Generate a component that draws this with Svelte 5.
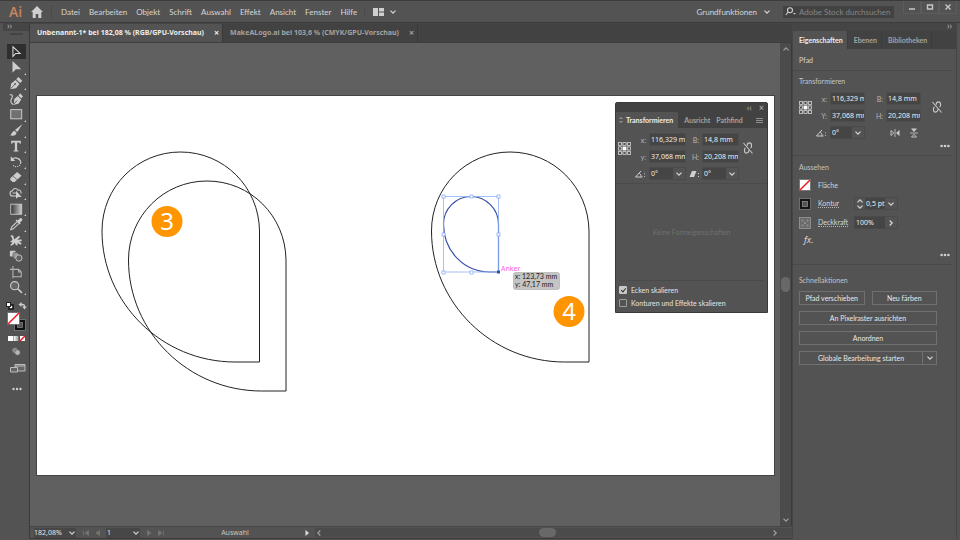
<script>
  const menus = ["Datei", "Bearbeiten", "Objekt", "Schrift", "Auswahl", "Effekt", "Ansicht", "Fenster", "Hilfe"];

  const tools = [
    { name: "Auswahl", icon: "select" },
    { name: "Direktauswahl", icon: "direct", more: true },
    { name: "Zeichenstift", icon: "pen", more: true },
    { name: "Kurvenzeichner", icon: "curve" },
    { name: "Rechteck", icon: "rect", more: true },
    { name: "Pinsel", icon: "brush", more: true },
    { name: "Text", icon: "type", more: true },
    { name: "Drehen", icon: "rotate", more: true },
    { name: "Radiergummi", icon: "eraser", more: true },
    { name: "Formerstellung", icon: "builder", more: true },
    { name: "Verlauf", icon: "gradient", more: true },
    { name: "Pipette", icon: "dropper", more: true },
    { name: "Marionette", icon: "puppet", more: true },
    { name: "Angleichen", icon: "blend" },
    { name: "Zeichenfläche", icon: "artboard" },
    { name: "Zoom", icon: "zoom", more: true },
  ];

  const handles = [
    [443, 195], [471, 195], [498, 195],
    [443, 233], [498, 233],
    [443, 271], [471, 271],
  ];

  const drop =
    "M180.5 151C224 151 259 186 259.500 230V361H235C162 361 102 302 102 230C102 186 137 151 180.500 151Z";

  let activeTool = $state("select");
  let scaleCorners = $state(true);
  let scaleStrokes = $state(false);
</script>

{#snippet chevron(dir = "down")}
  <svg class="chevron {dir}" viewBox="0 0 8 8" width="8" height="8" aria-hidden="true">
    <path d="M1.500 2.700 4 5.200 6.500 2.700" />
  </svg>
{/snippet}

{#snippet refPoint()}
  <svg class="ref-point" viewBox="0 0 13 13" width="13" height="13" aria-hidden="true">
    <path d="M2 2h9v9H2z" fill="none" stroke="#b8b8b8" />
    {#each [2, 6.5, 11] as cy}
      {#each [2, 6.5, 11] as cx}
        <rect x={cx - 1.5} y={cy - 1.5} width="3" height="3" fill={cx === 6.5 && cy === 6.5 ? "#fff" : "#535353"} stroke={cx === 6.5 && cy === 6.5 ? "#fff" : "#c4c4c4"} stroke-width="0.9" />
      {/each}
    {/each}
  </svg>
{/snippet}

{#snippet linkIcon()}
  <button class="icon-btn link" aria-label="Proportionen erhalten">
    <svg viewBox="0 0 12 12" width="12" height="12" fill="none" stroke="#c8c8c8" stroke-width="1.100">
      <path d="M5.300 3.800V3a2.100 2.100 0 0 1 4.200 0v1.500a2 2 0 0 1-1 1.600M6.700 8.200V9a2.100 2.100 0 0 1-4.200 0V7.500a2 2 0 0 1 1-1.600M1.500 1l9 10.500" />
    </svg>
  </button>
{/snippet}

{#snippet angleIcon()}
  <svg class="angle" viewBox="0 0 12 8" width="12" height="8" fill="none" stroke="#cfcfcf" stroke-width="1">
    <path d="M8.500 7H1.500L7 1M5.200 3.200c1.400.8 1.900 2.200 1.900 3.600" />
    <path d="M10.500 3.500v.8M10.500 6.200v.8" />
  </svg>
{/snippet}

{#snippet dots()}
  <button class="icon-btn dots" aria-label="Mehr Optionen">
    <svg viewBox="0 0 10 4" width="10" height="4" fill="#d0d0d0">
      <circle cx="1.600" cy="2" r="1.300" /><circle cx="5" cy="2" r="1.300" /><circle cx="8.400" cy="2" r="1.300" />
    </svg>
  </button>
{/snippet}

{#snippet toolIcon(icon)}
  <svg viewBox="0 0 16 16" width="14" height="14" fill="#cdcdcd" stroke="none">
    {#if icon === "select"}
      <path d="M4.500 2v11l3.200-3.300h5z" fill="none" stroke="#d8d8d8" stroke-width="1.200" />
    {:else if icon === "direct"}
      <path d="M4 1v13.500l3.800-3.800H14z" />
    {:else if icon === "pen"}
      <path d="M1.500 15 2.500 8.500l5-4 4.500 4.500-4 5zM8.300 3.700l2.400-2.700 4.500 4.500-2.500 2.500z" />
      <path d="m2 14.500 4.500-5" stroke="#535353" stroke-width="0.900" /><circle cx="7" cy="9" r="1" fill="#535353" />
    {:else if icon === "curve"}
      <path d="M5.500 14.500 6 8l4-3.500 4 4-3.200 4.800zM10.800 4l2-2.500 3.200 3.500-2 2z" />
      <path d="M.8 3.500c3-1.500 4 1.500 2.200 4s-1 5.500 2 7" fill="none" stroke="#cdcdcd" stroke-width="1.300" />
      <path d="m6 13.500 3.200-3.800" stroke="#535353" />
    {:else if icon === "rect"}
      <rect x="2" y="3" width="12.500" height="10.500" fill="#707070" stroke="#cdcdcd" stroke-width="1.100" />
    {:else if icon === "brush"}
      <path d="M15.500 1 9.500 10.200 6.800 8zM6 8.800l2.600 2.200c-.3 3-3.400 4.300-7.600 3C3.500 13 3 10 6 8.800z" />
    {:else if icon === "type"}
      <path d="M2.500 2h11v3.500h-1.200L11.800 4H9.300v8.800l1.600.5v1H5.100v-1l1.600-.5V4H4.200l-.5 1.500H2.500z" />
    {:else if icon === "rotate"}
      <path d="M3 5.200C7 1.500 13.500 4 13.500 9" fill="none" stroke="#cdcdcd" stroke-width="1.400" />
      <path d="M13.300 9C13 13.500 7 15 4 11" fill="none" stroke="#cdcdcd" stroke-width="1.200" stroke-dasharray="1.200 1.300" />
      <path d="M2 1.500v5.300h5.200z" />
    {:else if icon === "eraser"}
      <path d="m1.500 9.500 7.800-7.300 5 4.300-7.800 7.300H4.200L1.500 11.500z" />
      <path d="m4.500 7 5 4.300" stroke="#535353" stroke-width="0.900" />
    {:else if icon === "builder"}
      <path d="M8 11.500H4.500a3 3 0 0 1-.5-6c.5-3 5-3.500 6-.8 3-.5 4.500 2 3.600 4M4 8h4" fill="none" stroke="#cdcdcd" stroke-width="1.200" />
      <path d="M8 5.500v9.200l2.500-2.200h4z" />
    {:else if icon === "gradient"}
      <rect x="2" y="2.500" width="12.500" height="11.500" fill="url(#grad)" stroke="#cdcdcd" />
    {:else if icon === "dropper"}
      <path d="m10 4 2.500-2.500c1.500-1 3.500 1 2.500 2.500L12.500 6.500l.8.800-1.300 1.200-4.500-4.500 1.200-1.200z" />
      <path d="M9 5.500 3 11.500 2 14.500l3-1 6-6" fill="none" stroke="#cdcdcd" stroke-width="1.200" />
    {:else if icon === "puppet"}
      <path d="M1.500 3.500c1-1.500 3.500-1 3.800.8.200 1.200 0 2 .7 2.700l5.500-4 1.200 1.500L9.500 8l4.500-.8.800 1.800-3.500 1 3.200 1.500-1 1.800-4-1.800.5 2.500H8l-1.500-3c-1 2-2.800 3.500-5 3.300 0-1.800 2-1.500 2.300-3.800-1 .3-2.300-.2-2.300-1.500 1.500.3 2.300-.3 2.300-1.500S2.800 4 1.500 3.500z" />
    {:else if icon === "blend"}
      <rect x="1" y="2" width="6.500" height="6.500" rx="1" />
      <rect x="4.500" y="4" width="6.500" height="7" rx="2" fill="#999" stroke="#535353" stroke-width="0.800" />
      <circle cx="11.300" cy="10.300" r="3.600" fill="#606060" stroke="#cdcdcd" />
    {:else if icon === "artboard"}
      <path d="M4.500 1v14M1 5h10l3 3v5.500H4.500M11 5v3h3" fill="none" stroke="#b5b5b5" stroke-width="1.200" />
    {:else}
      <circle cx="6.500" cy="6.500" r="4.700" fill="#666" stroke="#cdcdcd" stroke-width="1.300" />
      <path d="m10 10 4.800 4.800" stroke="#cdcdcd" stroke-width="1.900" />
    {/if}
  </svg>
{/snippet}

<div class="app">
  <header class="menubar">
    <span class="logo">Ai</span>
    <button class="icon-btn home" aria-label="Startseite">
      <svg viewBox="0 0 12 12" width="12" height="12" fill="#cfcfcf"><path d="M6 0 0 6h1.700v6h3V8h2.600v4h3V6H12z" /></svg>
    </button>
    <nav>
      {#each menus as menu}
        <button class="menu">{menu}</button>
      {/each}
    </nav>
    <button class="icon-btn arrange" aria-label="Dokumente anordnen">
      <svg viewBox="0 0 11 8" width="11" height="8" fill="#cfcfcf"><path d="M0 0h5v8H0zM6 0h5v3.500H6zM6 4.500h5V8H6z" /></svg>
      {@render chevron()}
    </button>
    <button class="workspace">Grundfunktionen {@render chevron()}</button>
    <label class="search">
      <svg viewBox="0 0 12 9" width="12" height="9" fill="none" stroke="#d0d0d0" stroke-width="1.100">
        <circle cx="5" cy="3.200" r="2.500" /><path d="M3.200 5 .8 8" /><path d="M8 6h3L9.500 7.500z" fill="#d0d0d0" stroke="none" />
      </svg>
      <input type="text" placeholder="Adobe Stock durchsuchen" aria-label="Adobe Stock durchsuchen" />
    </label>
    <div class="window-buttons">
      <button aria-label="Minimieren"><svg viewBox="0 0 8 8" width="8" height="8"><path d="M1 6h6" stroke-width="1.500" /></svg></button>
      <button aria-label="Maximieren"><svg viewBox="0 0 8 8" width="8" height="8"><path d="M1.500 2h5v4h-5z" stroke-width="1.400" /></svg></button>
      <button aria-label="Schließen"><svg viewBox="0 0 8 8" width="8" height="8"><path d="m1.500 1.500 5 5M6.500 1.500l-5 5" stroke-width="1.400" /></svg></button>
    </div>
  </header>

  <div class="workarea">
    <aside class="toolbar">
      <div class="collapse">››</div>
      <div class="grip"></div>
      <div class="tools">
        {#each tools as tool}
          <button
            class="tool"
            class:active={activeTool === tool.icon}
            class:more={tool.more}
            aria-label={tool.name}
            onclick={() => (activeTool = tool.icon)}
          >
            {@render toolIcon(tool.icon)}
          </button>
        {/each}
      </div>
      <svg class="swatches" viewBox="0 0 22 96" width="22" height="96" aria-hidden="true">
        <defs>
          <linearGradient id="grad"><stop offset="0" stop-color="#333" /><stop offset="1" stop-color="#ccc" /></linearGradient>
          <linearGradient id="grad-light"><stop offset="0" stop-color="#fff" /><stop offset="1" stop-color="#999" /></linearGradient>
        </defs>
        <!-- default colours and swap -->
        <rect x="4" y="5" width="4" height="4" fill="#fff" stroke="#111" stroke-width="1.500" />
        <rect x="1.500" y="2.500" width="4" height="4" fill="#fff" stroke="#222" />
        <path d="M16 4.500h1.500a2 2 0 0 1 2 2V7" fill="none" stroke="#ccc" stroke-width="1.300" />
        <path d="M13.500 4.500 16.500 2v5zM17.200 6.500h4.600L19.500 9.500z" fill="#ccc" />
        <!-- stroke behind fill -->
        <rect x="9.500" y="19.500" width="11" height="11" fill="#111" stroke="#8a8a8a" stroke-width="0.700" />
        <rect x="12.500" y="22.500" width="5" height="5" fill="#535353" stroke="#8a8a8a" stroke-width="0.700" />
        <rect x="2.500" y="12.500" width="12" height="12" fill="#fff" stroke="#666" stroke-width="0.800" />
        <path d="M3 24 14 13" stroke="#f0141e" stroke-width="1.500" />
        <!-- colour, gradient, none -->
        <rect x="3" y="36" width="5" height="5" fill="#fff" />
        <rect x="8.500" y="36" width="5" height="5" fill="url(#grad-light)" />
        <rect x="15" y="36" width="5" height="5" fill="#fff" />
        <path d="m15 41 5-5" stroke="#f0141e" stroke-width="1.500" />
        <circle cx="10" cy="50.500" r="2.700" fill="#8c8c8c" />
        <circle cx="12.500" cy="52.500" r="2.700" fill="#b5b5b5" stroke="#535353" stroke-width="0.500" />
        <path d="M10 64.500h10v6.500H10zM10 66h10" fill="#666" stroke="#bdbdbd" />
        <path d="M5.500 67.500h7v4.500h-7z" fill="#666" stroke="#bdbdbd" />
        <g fill="#d0d0d0"><circle cx="8.500" cy="89" r="1.200" /><circle cx="12" cy="89" r="1.200" /><circle cx="15.500" cy="89" r="1.200" /></g>
      </svg>
    </aside>

    <main class="document">
      <div class="tabs">
        <div class="tab active">
          <span>Unbenannt-1* bei 182,08 % (RGB/GPU-Vorschau)</span>
          <button aria-label="Unbenannt-1 schließen">×</button>
        </div>
        <div class="tab">
          <span>MakeALogo.ai bei 103,6 % (CMYK/GPU-Vorschau)</span>
          <button aria-label="MakeALogo.ai schließen">×</button>
        </div>
      </div>

      <div class="canvas-row">
        <div class="canvas">
          <svg class="artboard" viewBox="37 95 737 379">
            <rect x="37" y="95" width="737" height="379" fill="#fff" />
            <g fill="none" stroke="#222" stroke-width="1">
              <path d={drop} />
              <path d={drop} transform="translate(26.500 29)" />
              <path d={drop} transform="translate(329.500 0)" />
            </g>
            <path d="M471 195.500C486 195.500 498.500 208 498.500 223V271H490C464 271 443.500 250 443.500 223C443.500 208 456 195.500 471 195.500Z" fill="none" stroke="#3a50a8" stroke-width="1.200" />
            <rect x="443.500" y="195.500" width="55" height="75.500" fill="none" stroke="#8fb0f5" stroke-width="0.800" />
            {#each handles as [x, y]}
              <rect x={x - 1} y={y - 1} width="3" height="3" fill="#fff" stroke="#7fa4f5" stroke-width="0.700" />
            {/each}
            <rect x="497" y="269.500" width="3" height="3" fill="#3a50a8" />
            <text class="hint" x="501" y="270">Anker</text>
            <rect x="513.500" y="271.500" width="46" height="17" rx="2" fill="#c4c4c4" stroke="#a8a8a8" stroke-width="0.600" />
            <text class="measure" x="515" y="278">x: 123,73 mm</text>
            <text class="measure" x="515" y="286">y: 47,17 mm</text>
            <circle cx="167" cy="220.500" r="15.500" fill="#ff9500" />
            <text class="badge" x="167" y="229">3</text>
            <circle cx="569" cy="310.500" r="15.500" fill="#ff9500" />
            <text class="badge" x="569" y="319">4</text>
          </svg>

          <section class="float">
            <div class="float-bar">
              <button aria-label="Minimieren">‹‹</button>
              <button aria-label="Schließen">×</button>
            </div>
            <div class="float-tabs">
              <button class="active">
                <svg viewBox="0 0 4 8" width="4" height="8" fill="none" stroke="#b0b0b0"><path d="m.5 3 1.500-1.500L3.500 3M.5 5 2 6.500 3.500 5" /></svg>
                Transformieren
              </button>
              <button>Ausricht</button>
              <button>Pathfind</button>
              <button class="burger" aria-label="Bedienfeldmenü">
                <svg viewBox="0 0 8 7" width="8" height="7" stroke="#999"><path d="M0 1.500h7M0 3.500h7M0 5.500h7" stroke-width="0.900" /></svg>
              </button>
            </div>
            <div class="transform narrow">
              <span class="ref">{@render refPoint()}</span>
              <label for="fx">x:</label><input id="fx" type="text" value="116,329 mm" />
              <label for="fb">B:</label><input id="fb" type="text" value="14,8 mm" />
              <span class="lock">{@render linkIcon()}</span>
              <label for="fy">y:</label><input id="fy" type="text" value="37,068 mm" />
              <label for="fh">H:</label><input id="fh" type="text" value="20,208 mm" />
              <label class="icon-label" for="fa" aria-label="Drehen">{@render angleIcon()}</label>
              <span class="combo"><input id="fa" type="text" value="0°" /><button aria-label="Winkel wählen">{@render chevron()}</button></span>
              <label class="icon-label" for="fs" aria-label="Verbiegen">
                <svg viewBox="0 0 10 8" width="10" height="8" fill="#cfcfcf"><path d="M3 1h4.500L5 7H.5zM9 3h1v1H9zM9 6h1v1H9z" /></svg>
              </label>
              <span class="combo"><input id="fs" type="text" value="0°" /><button aria-label="Neigung wählen">{@render chevron()}</button></span>
            </div>
            <p class="empty">Keine Formeigenschaften</p>
            <div class="checks">
              <label><input type="checkbox" bind:checked={scaleCorners} />Ecken skalieren</label>
              <label><input type="checkbox" bind:checked={scaleStrokes} />Konturen und Effekte skalieren</label>
            </div>
          </section>
        </div>
        <div class="vscroll">
          {@render chevron("up")}
          <span class="thumb"></span>
          {@render chevron()}
        </div>
      </div>

      <footer class="status">
        <div class="picker zoom">
          <select aria-label="Zoomstufe"><option>182,08%</option></select>
          {@render chevron()}
        </div>
        <button class="icon-btn nav" aria-label="Erste"><svg viewBox="0 0 8 8" width="8" height="8"><path d="M1.500 1.500v5M6.500 1.500v5L3 4z" /></svg></button>
        <button class="icon-btn nav" aria-label="Zurück"><svg viewBox="0 0 8 8" width="8" height="8"><path d="M5.500 1.500v5L2 4z" /></svg></button>
        <div class="picker page">
          <select aria-label="Zeichenfläche"><option>1</option></select>
          {@render chevron()}
        </div>
        <button class="icon-btn nav" aria-label="Weiter"><svg viewBox="0 0 8 8" width="8" height="8"><path d="M2.500 1.500v5L6 4z" /></svg></button>
        <button class="icon-btn nav" aria-label="Letzte"><svg viewBox="0 0 8 8" width="8" height="8"><path d="M6.500 1.500v5M1.500 1.500v5L5 4z" /></svg></button>
        <span class="current">Auswahl</span>
        <button class="icon-btn play" aria-label="Statusanzeige"><svg viewBox="0 0 8 8" width="8" height="8" fill="#ddd"><path d="M2.500 1v6L6 4z" /></svg></button>
        <div class="hscroll">
          {@render chevron("left")}
          <span class="thumb"></span>
          {@render chevron("right")}
        </div>
      </footer>
    </main>

    <aside class="properties">
      <div class="collapse">››</div>
      <div class="panel-tabs">
        <button class="active">Eigenschaften</button>
        <button>Ebenen</button>
        <button>Bibliotheken</button>
      </div>
      <div class="kind">Pfad</div>

      <section class="group">
        <h2>Transformieren</h2>
        <div class="transform">
          <span class="ref">{@render refPoint()}</span>
          <label for="px">x:</label><input id="px" type="text" value="116,329 mm" />
          <label for="pb">B:</label><input id="pb" type="text" value="14,8 mm" />
          <span class="lock">{@render linkIcon()}</span>
          <label for="py">Y:</label><input id="py" type="text" value="37,068 mm" />
          <label for="ph">H:</label><input id="ph" type="text" value="20,208 mm" />
          <label class="icon-label" for="pa" aria-label="Drehen">{@render angleIcon()}</label>
          <span class="combo"><input id="pa" type="text" value="0°" /><button aria-label="Winkel wählen">{@render chevron()}</button></span>
          <span class="flips">
            <button class="icon-btn" aria-label="Horizontal spiegeln">
              <svg viewBox="0 0 10 8" width="10" height="8"><path d="M1 1.500v5L3.800 4z" fill="none" stroke="#ccc" stroke-width="0.900" /><path d="M5 0v8" stroke="#ccc" stroke-width="0.800" /><path d="M9.500 1v6L6 4z" fill="#ccc" /></svg>
            </button>
            <button class="icon-btn" aria-label="Vertikal spiegeln">
              <svg viewBox="0 0 8 10" width="8" height="10"><path d="M1 .5h6L4 4z" fill="#ccc" /><path d="M0 5h8" stroke="#ccc" stroke-width="0.800" /><path d="M1.500 9h5L4 6.200z" fill="none" stroke="#ccc" stroke-width="0.900" /></svg>
            </button>
          </span>
        </div>
        {@render dots()}
      </section>

      <section class="group look">
        <h2>Aussehen</h2>
        <div class="row">
          <svg viewBox="0 0 12 12" width="12" height="12"><rect x=".5" y=".5" width="11" height="11" fill="#fff" stroke="#777" /><path d="M1 11 11 1" stroke="#f0141e" stroke-width="1.500" /></svg>
          <span class="name">Fläche</span>
        </div>
        <div class="row">
          <svg viewBox="0 0 12 12" width="12" height="12"><rect x=".5" y=".5" width="11" height="11" fill="#151515" stroke="#888" stroke-width="0.700" /><rect x="3.500" y="3.500" width="5" height="5" fill="#535353" stroke="#999" stroke-width="0.700" /></svg>
          <button class="name underlined">Kontur</button>
          <span class="combo">
            <button class="stepper" aria-label="Konturstärke ändern">{@render chevron("up")}{@render chevron()}</button>
            <input type="text" value="0,5 pt" aria-label="Konturstärke" />
            <button aria-label="Konturstärke wählen">{@render chevron()}</button>
          </span>
        </div>
        <div class="row">
          <svg viewBox="0 0 12 12" width="12" height="12"><rect x=".5" y=".5" width="11" height="11" fill="#6a6a6a" stroke="#999" stroke-width="0.800" /><path d="M2.500 2.500h2v2h-2zM7.500 2.500h2v2h-2zM5 5h2v2H5zM2.500 7.500h2v2h-2zM7.500 7.500h2v2h-2z" fill="#8d8d8d" /></svg>
          <button class="name underlined">Deckkraft</button>
          <span class="combo">
            <input type="text" value="100%" aria-label="Deckkraft" />
            <button aria-label="Deckkraft wählen">{@render chevron("right")}</button>
          </span>
        </div>
        <button class="effect">fx.</button>
        {@render dots()}
      </section>

      <section class="group actions">
        <h2>Schnellaktionen</h2>
        <div class="buttons">
          <button>Pfad verschieben</button>
          <button>Neu färben</button>
          <button class="wide">An Pixelraster ausrichten</button>
          <button class="wide">Anordnen</button>
          <span class="wide split">
            <button>Globale Bearbeitung starten</button>
            <button aria-label="Optionen">{@render chevron()}</button>
          </span>
        </div>
      </section>
    </aside>
  </div>
</div>

<style>
  :global(body) {
    background: #535353;
  }

  .app {
    box-sizing: border-box;
    display: flex;
    flex-direction: column;
    min-height: 100vh;
    border-top: 1px solid #3c3c3c;
    background: #535353;
    color: #d6d6d6;
    font-family: Lato, "Open Sans", sans-serif;
    font-size: 7px;
    line-height: 10px;
  }

  button,
  input,
  select {
    box-sizing: border-box;
    margin: 0;
    padding: 0;
    border: 0;
    border-radius: 0;
    background: none;
    color: inherit;
    font: inherit;
    min-width: 0;
  }

  svg {
    display: block;
    flex: none;
  }

  .icon-btn {
    display: flex;
    align-items: center;
    justify-content: center;
  }

  .chevron {
    fill: none;
    stroke: #d6d6d6;
    stroke-width: 1.2;
  }

  .chevron.up {
    transform: rotate(180deg);
  }

  .chevron.left {
    transform: rotate(90deg);
  }

  .chevron.right {
    transform: rotate(-90deg);
  }

  /* Menu bar */
  .menubar {
    display: flex;
    align-items: center;
    height: 22px;
    box-sizing: border-box;
    padding: 0 3px 0 9px;
    border-bottom: 1px solid #3c3c3c;
  }

  .logo {
    width: 22px;
    color: #c98560;
    font-family: "Open Sans", sans-serif;
    font-size: 14px;
    font-weight: 600;
    line-height: 18px;
  }

  nav {
    display: flex;
    gap: 9px;
    margin-left: 8px;
    padding-left: 9px;
    border-left: 1px solid #4a4a4a;
  }

  .menu,
  .workspace {
    font-size: 8px;
    line-height: 14px;
  }

  .arrange {
    gap: 5px;
    margin-left: 7px;
    padding-left: 8px;
    border-left: 1px solid #4a4a4a;
  }

  .workspace {
    display: flex;
    align-items: center;
    gap: 6px;
    margin-left: auto;
    padding-right: 12px;
  }

  .search {
    display: flex;
    align-items: center;
    gap: 2px;
    width: 111px;
    height: 12px;
    padding-left: 2px;
    box-sizing: border-box;
    background: #424242;
  }

  .search input {
    flex: 1;
    font-size: 8px;
  }

  .search input::placeholder {
    color: #858585;
    opacity: 1;
  }

  .window-buttons {
    display: flex;
    align-self: flex-start;
    margin-left: 9px;
  }

  .window-buttons button {
    display: flex;
    align-items: center;
    justify-content: center;
    width: 18px;
    height: 13px;
    border: 1px solid #5c5c5c;
    border-top: 0;
  }

  .window-buttons svg {
    fill: none;
    stroke: #c8c8c8;
  }

  /* Main row */
  .workarea {
    display: flex;
    flex: 1;
    padding: 0 3px 1px 3px;
  }

  .collapse {
    height: 8px;
    padding: 0 4px;
    background: #454545;
    color: #c0c0c0;
    font-size: 9px;
    line-height: 6px;
  }

  /* Tools */
  .toolbar {
    display: flex;
    flex-direction: column;
    align-items: center;
    width: 27px;
    border-right: 1px solid #3a3a3a;
    box-sizing: border-box;
  }

  .toolbar .collapse {
    align-self: stretch;
  }

  .grip {
    width: 13px;
    height: 2px;
    margin: 2px 0 9px;
    background: #444;
  }

  .tools {
    display: flex;
    flex-direction: column;
    justify-content: space-between;
    height: 251px;
  }

  .tool {
    position: relative;
    display: flex;
    align-items: center;
    justify-content: center;
    width: 19px;
    height: 15px;
  }

  .tool.active {
    background: #2f2f2f;
  }

  .tool.more::after {
    content: "";
    position: absolute;
    right: 0;
    bottom: 0;
    border: 1px solid transparent;
    border-right-color: #c8c8c8;
    border-bottom-color: #c8c8c8;
  }

  .swatches {
    margin-top: 5px;
  }

  /* Document */
  .document {
    display: flex;
    flex: 1;
    flex-direction: column;
    min-width: 0;
    font-family: "Noto Sans", "Open Sans", sans-serif;
  }

  .tabs {
    display: flex;
    height: 18px;
    border-top: 1px solid #464646;
    border-bottom: 1px solid #3e3e3e;
    background: #424242;
    font-weight: 700;
  }

  .tab {
    display: flex;
    align-items: center;
    gap: 10px;
    padding: 0 3px 0 7px;
    border-right: 1px solid #3a3a3a;
    color: #a2a2a2;
    white-space: nowrap;
  }

  .tab.active {
    background: #535353;
    color: #ededed;
  }

  .tab button {
    font-size: 9px;
  }

  .canvas-row {
    display: flex;
    flex: 1;
  }

  .canvas {
    position: relative;
    flex: 1;
    min-width: 0;
    padding: 53px 6px 0 7px;
    background: #606060;
  }

  .artboard {
    width: 100%;
    height: auto;
    outline: 1px solid #444;
  }

  .hint {
    fill: #ff62e8;
    font-size: 7px;
  }

  .measure {
    fill: #1c1c1c;
    font-family: Lato, sans-serif;
    font-size: 7px;
  }

  .badge {
    fill: #fff;
    font-size: 24px;
    text-anchor: middle;
  }

  .vscroll {
    display: flex;
    flex-direction: column;
    align-items: center;
    justify-content: space-between;
    width: 11px;
    padding: 2px 0;
    border-right: 1px solid #3a3a3a;
    background: #4b4b4b;
  }

  .vscroll .chevron,
  .hscroll .chevron {
    stroke: #a0a0a0;
  }

  .thumb {
    border-radius: 5px;
    background: #686868;
  }

  .vscroll .thumb {
    width: 9px;
    height: 15px;
  }

  .status {
    display: flex;
    align-items: center;
    height: 13px;
    padding-left: 4px;
    border-top: 1px solid #464646;
    border-bottom: 1px solid #3c3c3c;
    box-sizing: border-box;
  }

  .picker {
    display: flex;
    align-items: center;
    background: #474747;
  }

  .picker select {
    flex: 1;
    appearance: none;
    color: #e8e8e8;
  }

  .zoom {
    width: 42px;
    margin-right: 4px;
  }

  .page {
    width: 34px;
    padding-left: 1px;
    margin: 0 3px 0 2px;
    box-sizing: border-box;
  }

  .nav {
    width: 12px;
    height: 10px;
  }

  .nav svg {
    fill: #747474;
    stroke: #747474;
    stroke-width: 0.8;
  }

  .current {
    width: 136px;
    color: #c4c4c4;
    text-align: center;
  }

  .hscroll {
    display: flex;
    flex: 1;
    align-items: center;
    justify-content: space-between;
    margin-left: 4px;
    padding-right: 13px;
    background: #4b4b4b;
  }

  .hscroll .thumb {
    width: 17px;
    height: 9px;
  }

  /* Transform fields, shared by both panels */
  .transform {
    display: grid;
    grid-template-columns: 13px 12px 35px 15px 35px 1fr;
    grid-auto-rows: 13px;
    gap: 4px 3px;
    align-items: center;
  }

  .transform label {
    color: #b5b5b5;
    text-align: right;
  }

  .transform input,
  .combo input {
    width: 100%;
    height: 13px;
    padding-left: 1px;
    border: 1px solid #4d4d4d;
    background: #454545;
    color: #ededed;
    font-family: "Noto Sans", "Open Sans", sans-serif;
  }

  .transform .icon-label {
    display: flex;
    grid-column: 2;
    justify-content: flex-end;
  }

  .transform .icon-label + .combo + .icon-label {
    grid-column: 4;
  }

  .ref {
    grid-row: 1 / 3;
  }

  .lock {
    grid-row: 1 / 3;
    grid-column: 6;
    justify-self: center;
  }

  .combo {
    display: flex;
    align-items: center;
    height: 13px;
    border: 1px solid #4a4a4a;
    box-sizing: border-box;
  }

  .combo input {
    flex: 1;
    height: 11px;
    border: 0;
  }

  .combo button {
    display: flex;
    align-items: center;
    justify-content: center;
    width: 12px;
    height: 11px;
  }

  .flips {
    display: flex;
    grid-column: 4 / 6;
    gap: 10px;
    padding-left: 22px;
  }

  /* Floating transform panel */
  .float {
    position: absolute;
    top: 59px;
    right: 12px;
    width: 153px;
    box-sizing: border-box;
    border: 1px solid #3a3a3a;
    border-radius: 2px 2px 0 0;
    background: #535353;
    font-family: Lato, "Open Sans", sans-serif;
  }

  .float-bar {
    display: flex;
    justify-content: flex-end;
    gap: 7px;
    height: 9px;
    padding-right: 3px;
    background: #424242;
    color: #bdbdbd;
    font-size: 9px;
    line-height: 8px;
  }

  .float-tabs {
    display: flex;
    height: 16px;
    background: #424242;
    font-weight: 700;
  }

  .float-tabs button {
    margin-right: 6px;
    color: #a2a2a2;
  }

  .float-tabs .active {
    display: flex;
    align-items: center;
    gap: 3px;
    padding: 0 5px 0 3px;
    background: #535353;
    color: #ededed;
  }

  .float-tabs .burger {
    margin: 0 3px 0 auto;
  }

  .narrow {
    grid-template-columns: 13px 12px 37px 10px 37px 1fr;
    padding: 5px 2px 3px;
    border-bottom: 1px solid #4b4b4b;
  }

  .narrow .lock {
    justify-self: start;
  }

  .empty {
    margin: 0 3px;
    padding: 43px 0;
    border-bottom: 1px solid #4b4b4b;
    color: #707070;
    text-align: center;
  }

  .checks {
    display: flex;
    flex-direction: column;
    gap: 3px;
    padding: 4px 3px;
    color: #e4e4e4;
  }

  .checks label {
    display: flex;
    align-items: center;
    gap: 4px;
  }

  .checks input {
    position: relative;
    width: 8px;
    height: 8px;
    appearance: none;
    border: 1px solid #9c9c9c;
    border-radius: 1px;
  }

  .checks input:checked {
    border-color: #c8c8c8;
    background: #c8c8c8;
  }

  .checks input:checked::after {
    content: "";
    position: absolute;
    top: 0;
    left: 2px;
    width: 2px;
    height: 4px;
    border: solid #333;
    border-width: 0 1px 1px 0;
    transform: rotate(40deg);
  }

  /* Properties */
  .properties {
    width: 165px;
    border: solid #454545;
    border-width: 0 1px;
    box-sizing: border-box;
  }

  .properties .collapse {
    text-align: right;
  }

  .panel-tabs {
    display: flex;
    height: 18px;
    background: #424242;
    font-weight: 700;
  }

  .panel-tabs button {
    padding: 0 4px 0 6px;
    border-right: 1px solid #3c3c3c;
    color: #a2a2a2;
  }

  .panel-tabs .active {
    background: #535353;
    color: #ededed;
  }

  .kind {
    margin-right: 4px;
    padding: 6px 6px 5px;
    border-bottom: 1px solid #494949;
  }

  .group {
    margin-right: 4px;
    padding: 5px 2px 5px 6px;
    border-bottom: 1px solid #494949;
  }

  h2 {
    margin: 0 0 6px;
    color: #c4c4c4;
    font-size: 7px;
    font-weight: 400;
    line-height: 10px;
  }

  .dots {
    height: 8px;
    margin: 3px 0 0 auto;
  }

  .look {
    padding-top: 6px;
  }

  .look h2 {
    margin-bottom: 3px;
  }

  .row {
    display: grid;
    grid-template-columns: 12px 29px 44px;
    column-gap: 7px;
    align-items: center;
    height: 19px;
  }

  .name {
    justify-self: start;
  }

  .underlined {
    border-bottom: 1px dotted #b5b5b5;
    line-height: 8px;
  }

  .combo .stepper {
    flex-direction: column;
    width: 10px;
  }

  .stepper svg {
    margin: -1px 0;
  }

  .effect {
    display: block;
    margin-left: 5px;
    font-family: "Noto Sans", sans-serif;
    font-size: 9px;
    font-style: italic;
    line-height: 16px;
  }

  .actions {
    border-bottom: 0;
    padding-top: 10px;
  }

  .buttons {
    display: grid;
    grid-template-columns: 1fr 1fr;
    gap: 6px 7px;
    width: 138px;
    color: #e8e8e8;
  }

  .buttons button {
    height: 14px;
    border: 1px solid #707070;
    white-space: nowrap;
  }

  .wide {
    grid-column: 1 / 3;
  }

  .split {
    display: flex;
  }

  .split button:first-child {
    flex: 1;
  }

  .split button:last-child {
    display: flex;
    align-items: center;
    justify-content: center;
    width: 14px;
    border-left: 0;
  }
</style>
